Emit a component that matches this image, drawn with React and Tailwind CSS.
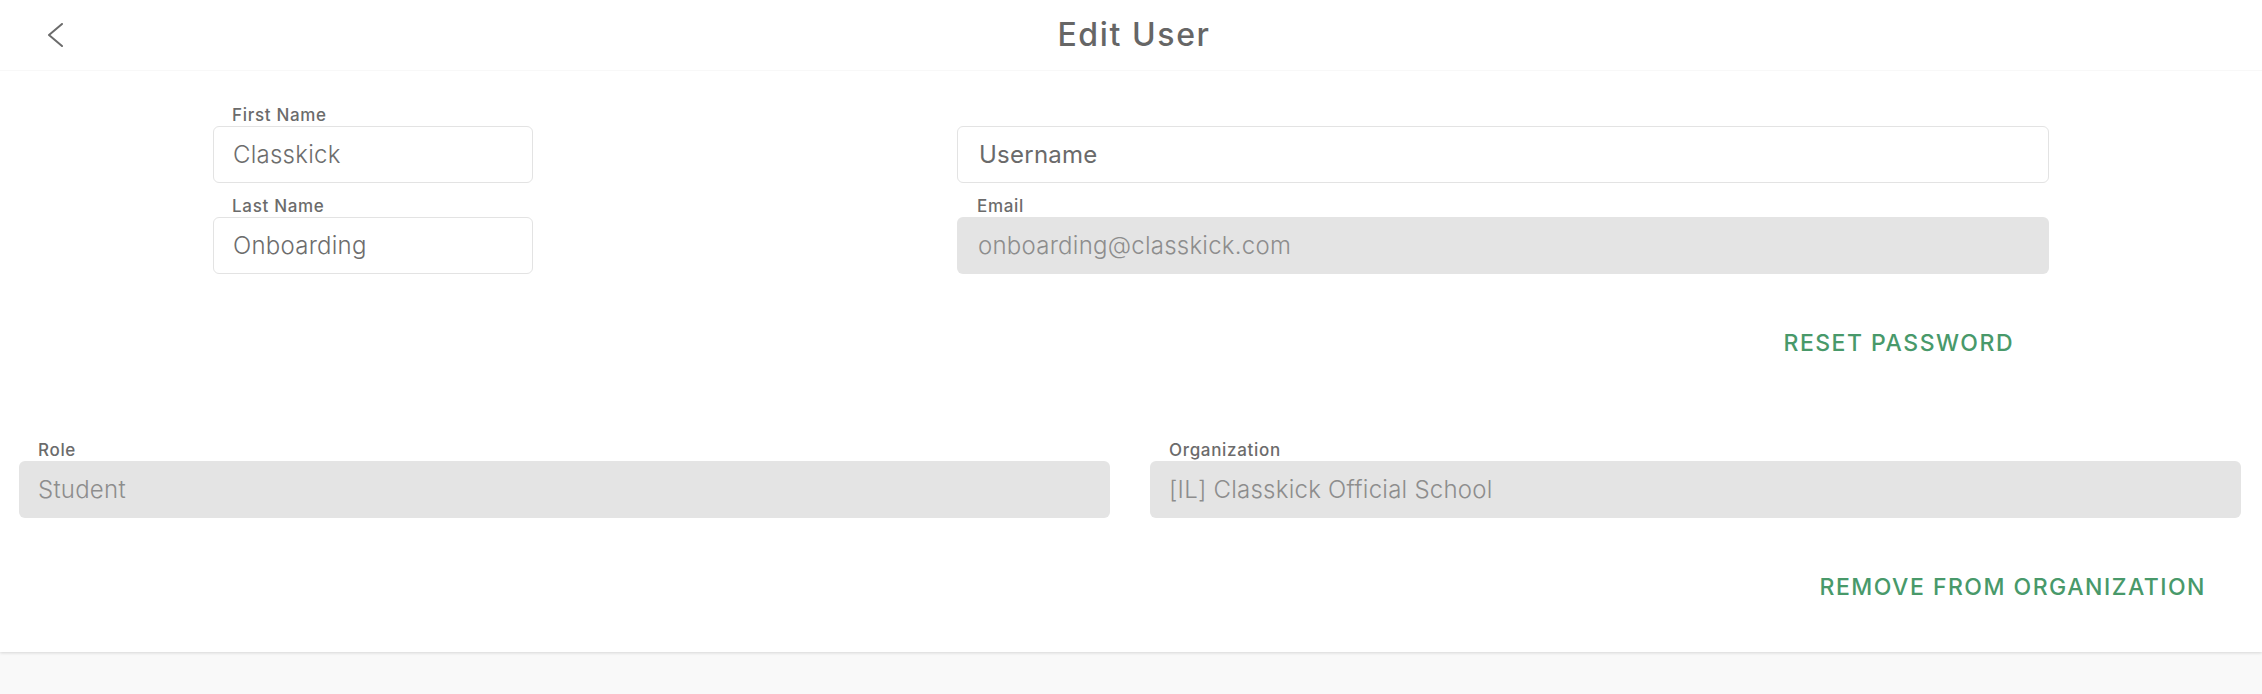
import { useState } from "react";

const font = { fontFamily: "Inter, 'Noto Sans', sans-serif" };

function Label({ children, className = "" }) {
  return (
    <div
      className={`h-[22px] text-[17px] leading-[22px] font-medium tracking-[0.04em] text-[#6b6b6b] ${className}`}
    >
      {children}
    </div>
  );
}

function TextField({ label, value, placeholder, onChange, pad = "px-[19px]" }) {
  return (
    <div className="flex flex-col">
      {label ? <Label className="pl-[19px]">{label}</Label> : <div className="h-[22px]" />}
      <input
        value={value}
        placeholder={placeholder}
        onChange={(e) => onChange?.(e.target.value)}
        className={`h-[57px] w-full rounded-[6px] border border-[#e3e3e3] bg-white ${pad} text-[24px] font-light tracking-[0.01em] text-[#6d6d6d] outline-none placeholder:font-normal placeholder:text-[#6a6a6a]`}
      />
    </div>
  );
}

function ReadOnlyField({ label, value, pad = "px-[19px]" }) {
  return (
    <div className="flex flex-col">
      <Label className={pad === "px-[19px]" ? "pl-[19px]" : "pl-[20px]"}>{label}</Label>
      <div
        className={`flex h-[57px] items-center rounded-[6px] bg-[#e4e4e4] ${pad} text-[24px] font-light tracking-[0.01em] text-[#8d8d8d]`}
      >
        {value}
      </div>
    </div>
  );
}

function LinkButton({ children }) {
  return (
    <button className="px-[35px] py-[14px] text-[23px] leading-[28px] font-medium uppercase tracking-[0.065em] text-[#48996a] hover:text-[#3a8458]">
      {children}
    </button>
  );
}

export default function App() {
  const [firstName, setFirstName] = useState("Classkick");
  const [lastName, setLastName] = useState("Onboarding");
  const [username, setUsername] = useState("");

  return (
    <div className="min-h-screen bg-[#f9f9f9]" style={font}>
      <div className="bg-white shadow-[0_1px_3px_rgba(0,0,0,0.14)]">
        {/* Header */}
        <div className="grid h-[71px] grid-cols-[1fr_auto_1fr] items-center border-b border-[#f8f8f8]">
          <div className="flex pl-[47px]">
            <button aria-label="Back" className="flex h-[24px] w-[16px] items-center">
              <svg width="16" height="24" viewBox="0 0 16 24" fill="none">
                <polyline
                  points="15,1 2,12 15,23"
                  stroke="#6b6b6b"
                  strokeWidth="2"
                  strokeLinecap="round"
                  strokeLinejoin="round"
                />
              </svg>
            </button>
          </div>
          <h1 className="pl-[6px] text-[32px] font-medium tracking-[0.05em] text-[#666666]">
            Edit User
          </h1>
          <div />
        </div>

        {/* Name, username, email */}
        <div className="mx-auto flex w-[1836px] justify-between pt-[33px]">
          <div className="flex w-[320px] flex-col gap-[12px]">
            <TextField label="First Name" value={firstName} onChange={setFirstName} />
            <TextField label="Last Name" value={lastName} onChange={setLastName} />
          </div>
          <div className="flex w-[1092px] flex-col">
            <div className="flex flex-col gap-[12px]">
              <TextField
                placeholder="Username"
                value={username}
                onChange={setUsername}
                pad="px-[21px]"
              />
              <ReadOnlyField label="Email" value="onboarding@classkick.com" pad="px-[21px]" />
            </div>
            <div className="mt-[41px] flex justify-end">
              <LinkButton>Reset Password</LinkButton>
            </div>
          </div>
        </div>

        {/* Role and organization */}
        <div className="mt-[68px] grid grid-cols-2 gap-[40px] pl-[19px] pr-[21px] pb-[37px]">
          <ReadOnlyField label="Role" value="Student" />
          <div className="flex flex-col">
            <ReadOnlyField label="Organization" value="[IL] Classkick Official School" />
            <div className="mt-[41px] flex justify-end">
              <LinkButton>Remove From Organization</LinkButton>
            </div>
          </div>
        </div>
      </div>
    </div>
  );
}
